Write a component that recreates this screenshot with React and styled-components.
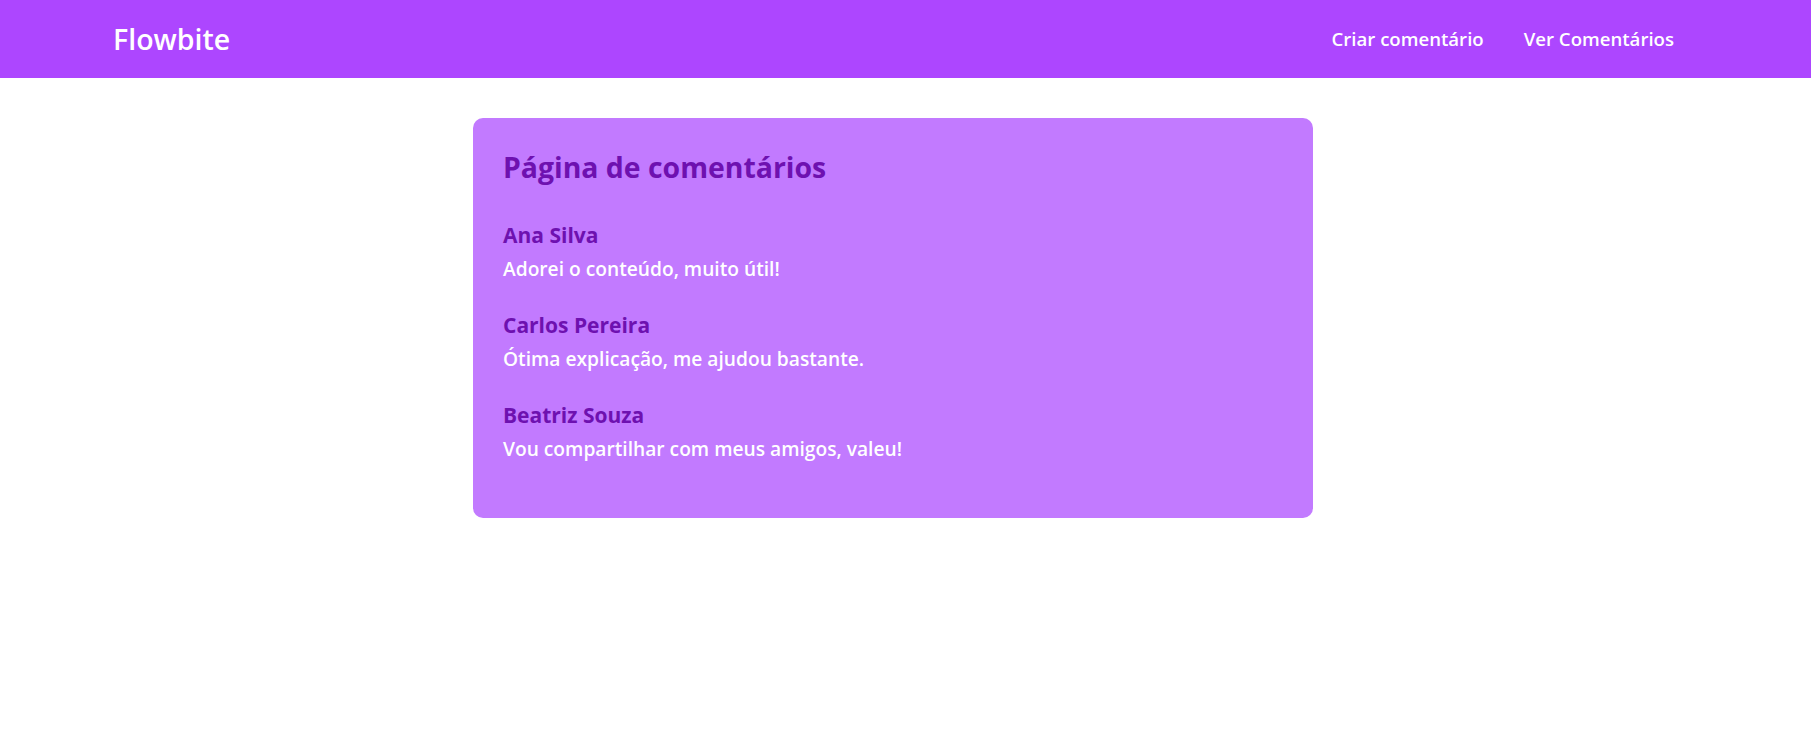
import React from "react";
import styled, { createGlobalStyle } from "styled-components";

const GlobalStyle = createGlobalStyle`
  html, body {
    margin: 0;
    padding: 0;
    background: #ffffff;
  }
  body {
    font-family: "Segoe UI", "Open Sans", "Noto Sans", sans-serif;
    -webkit-font-smoothing: antialiased;
  }
  * { box-sizing: border-box; }
`;

const NavBar = styled.nav`
  height: 78px;
  background: #ad46ff;
  display: flex;
  align-items: center;
  justify-content: space-between;
  padding: 0 137px 0 113px;
`;

const Brand = styled.a`
  color: #ffffff;
  font-size: 28.5px;
  line-height: 40px;
  font-weight: 600;
  text-decoration: none;
  white-space: nowrap;
`;

const NavLinks = styled.ul`
  list-style: none;
  margin: 0;
  padding: 0;
  display: flex;
  align-items: center;
  gap: 40px;
`;

const NavLink = styled.a`
  color: #ffffff;
  font-size: 18.6px;
  line-height: 30px;
  font-weight: 600;
  text-decoration: none;
  white-space: nowrap;
`;

const Main = styled.main`
  padding: 40px 0 0 473px;
`;

const Card = styled.section`
  width: 840px;
  background: #c27aff;
  border-radius: 10px;
  padding: 32px 30px 54px 30px;
`;

const Title = styled.h1`
  margin: 0 0 33px 0;
  color: #6e11b0;
  font-size: 28.4px;
  line-height: 35px;
  font-weight: 700;
`;

const CommentList = styled.div`
  display: flex;
  flex-direction: column;
  gap: 24px;
`;

const Comment = styled.article`
  display: flex;
  flex-direction: column;
`;

const Author = styled.h2`
  margin: 0;
  color: #6e11b0;
  font-size: 21px;
  line-height: 34px;
  font-weight: 700;
`;

const Text = styled.p`
  margin: 2px 0 0 0;
  color: #ffffff;
  font-size: 19.2px;
  line-height: 30px;
  font-weight: 600;
`;

const comments = [
  { author: "Ana Silva", text: "Adorei o conteúdo, muito útil!" },
  { author: "Carlos Pereira", text: "Ótima explicação, me ajudou bastante." },
  { author: "Beatriz Souza", text: "Vou compartilhar com meus amigos, valeu!" },
];

export default function App() {
  return (
    <>
      <GlobalStyle />
      <NavBar>
        <Brand href="#">Flowbite</Brand>
        <NavLinks>
          <li><NavLink href="#">Criar comentário</NavLink></li>
          <li><NavLink href="#">Ver Comentários</NavLink></li>
        </NavLinks>
      </NavBar>
      <Main>
        <Card>
          <Title>Página de comentários</Title>
          <CommentList>
            {comments.map((c) => (
              <Comment key={c.author}>
                <Author>{c.author}</Author>
                <Text>{c.text}</Text>
              </Comment>
            ))}
          </CommentList>
        </Card>
      </Main>
    </>
  );
}
